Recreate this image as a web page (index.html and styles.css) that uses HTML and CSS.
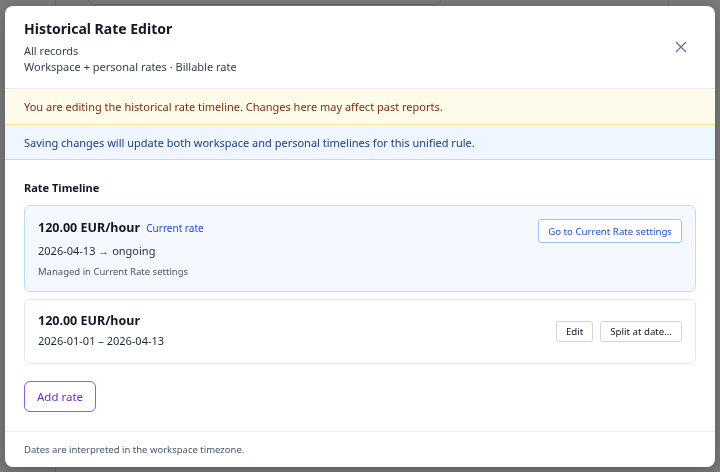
FILE: index.html
```html
<!DOCTYPE html>
<html>
<head>
<meta charset="UTF-8">
<title>Historical Rate Editor</title>
<link rel="stylesheet" href="styles.css">
</head>
<body>
  <div class="backdrop">
    <div class="bg-sidebar"></div>
    <div class="bg-card"></div>
    <div class="bg-line"></div>
  </div>

  <div class="overlay">
    <div class="modal">
      <div class="modal-header">
        <div>
          <h1>Historical Rate Editor</h1>
          <div class="sub">All records</div>
          <div class="sub">Workspace + personal rates · Billable rate</div>
        </div>
        <button class="close" title="Close">
          <svg width="12" height="12" viewBox="0 0 12 12"><path d="M1 1L11 11M11 1L1 11" stroke="#64748b" stroke-width="1.3" fill="none"/></svg>
        </button>
      </div>

      <div class="notice warn">You are editing the historical rate timeline. Changes here may affect past reports.</div>
      <div class="notice info">Saving changes will update both workspace and personal timelines for this unified rule.</div>

      <div class="modal-body">
        <h2>Rate Timeline</h2>

        <div class="rate-card current">
          <div class="rate-info">
            <div class="rate-title">120.00 EUR/hour <span class="tag">Current rate</span></div>
            <div class="rate-dates">2026-04-13 → ongoing</div>
            <div class="rate-note">Managed in Current Rate settings</div>
          </div>
          <div class="rate-actions">
            <button class="btn btn-blue">Go to Current Rate settings</button>
          </div>
        </div>

        <div class="rate-card">
          <div class="rate-info">
            <div class="rate-title">120.00 EUR/hour</div>
            <div class="rate-dates">2026-01-01 – 2026-04-13</div>
          </div>
          <div class="rate-actions">
            <button class="btn">Edit</button>
            <button class="btn">Split at date…</button>
          </div>
        </div>

        <button class="add-btn">Add rate</button>
      </div>

      <div class="modal-footer">Dates are interpreted in the workspace timezone.</div>
    </div>
  </div>
</body>
</html>
```

FILE: styles.css
```css
body {
  margin: 0;
  font-family: "Noto Sans", "Open Sans", sans-serif;
  color: #111827;
  background: #f3f4f6;
  width: 720px;
  height: 472px;
  overflow: hidden;
}

/* page behind the dialog */
.backdrop {
  position: absolute;
  inset: 0;
}

.bg-sidebar {
  position: absolute;
  left: 0;
  top: 0;
  bottom: 0;
  width: 55px;
  border-right: 1px solid #d1d5db;
}

.bg-card {
  position: absolute;
  left: 88px;
  top: -20px;
  width: 352px;
  height: 23px;
  border: 1px solid #d1d5db;
  border-radius: 6px;
}

.bg-line {
  position: absolute;
  left: 668px;
  top: 0;
  height: 6px;
  border-left: 1px solid #d1d5db;
}

.overlay {
  position: fixed;
  inset: 0;
  background: rgba(0, 0, 0, 0.5);
  padding: 6px 5px 5px 5px;
}

.modal {
  background: #fff;
  border-radius: 8px;
  height: 461px;
  display: flex;
  flex-direction: column;
  overflow: hidden;
  box-shadow: 0 4px 16px rgba(0, 0, 0, 0.25);
}

.modal-header {
  display: flex;
  justify-content: space-between;
  align-items: center;
  padding: 13px 24px 13px 19px;
  border-bottom: 1px solid #eceef2;
}

h1 {
  font-size: 14px;
  line-height: 20px;
  font-weight: 700;
  margin: 0 0 4px 0;
  color: #111827;
}

.sub {
  font-size: 11px;
  line-height: 16px;
  color: #334155;
}

.close {
  background: none;
  border: none;
  padding: 4px;
  cursor: pointer;
  margin-top: 2px;
}

.notice {
  font-size: 11px;
  padding: 0 19px;
  height: 35px;
  display: flex;
  align-items: center;
}

.warn {
  background: #fffbeb;
  color: #7c2d12;
  border-bottom: 1px solid #fde68a;
}

.info {
  background: #eff6ff;
  color: #1e3a8a;
  border-bottom: 1px solid #bfdbfe;
}

.modal-body {
  flex: 1;
  padding: 20px 19px 19px 19px;
}

h2 {
  font-size: 11px;
  font-weight: 700;
  margin: 0 0 10px 0;
}

.rate-card {
  display: flex;
  justify-content: space-between;
  align-items: flex-start;
  border: 1px solid #e5e7eb;
  border-radius: 6px;
  padding: 11px 13px 13px 13px;
  margin-bottom: 7px;
}

.rate-card.current {
  background: #f5f9ff;
  border-color: #bfdbfe;
  padding-top: 12px;
  padding-bottom: 13px;
}

.rate-title {
  font-size: 12.5px;
  font-weight: 700;
  line-height: 20px;
}

.tag {
  font-size: 10px;
  font-weight: 400;
  color: #1d4ed8;
  margin-left: 3px;
}

.rate-dates {
  font-size: 11px;
  line-height: 18px;
  margin-top: 1px;
  color: #1f2937;
}

.current .rate-dates {
  margin-top: 4px;
}

.rate-note {
  font-size: 9.5px;
  color: #4b5563;
  margin-top: 5px;
}

.rate-actions {
  display: flex;
  gap: 7px;
}

.current .rate-actions {
  margin-top: 1px;
}

.rate-card:not(.current) .rate-actions {
  margin-top: 10px;
}

.btn {
  font-family: inherit;
  font-size: 9.7px;
  background: #fff;
  color: #111827;
  border: 1px solid #d1d5db;
  border-radius: 3px;
  padding: 0 9px;
  height: 21px;
  cursor: pointer;
}

.btn-blue {
  color: #1d4ed8;
  border-color: #93c5fd;
  height: 24px;
}

.add-btn {
  font-family: inherit;
  font-size: 11.5px;
  color: #6d28d9;
  background: #fff;
  border: 1px solid #8b5cf6;
  border-radius: 6px;
  height: 31px;
  padding: 0 12px;
  margin-top: 10px;
  cursor: pointer;
}

.modal-footer {
  border-top: 1px solid #eceef2;
  padding: 0 19px;
  height: 35px;
  display: flex;
  align-items: center;
  font-size: 9.5px;
  color: #4b5563;
}
```
